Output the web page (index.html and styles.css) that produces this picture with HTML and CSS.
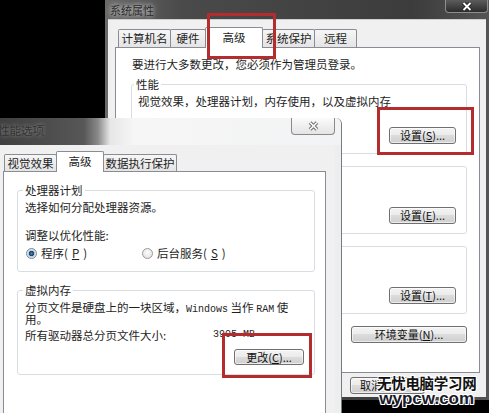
FILE: index.html
```html
<!DOCTYPE html>
<html lang="zh-CN">
<head>
  <meta charset="UTF-8">
  <title>系统属性 – 性能选项</title>
  <link rel="stylesheet" href="styles.css">
</head>
<body>

<!-- System properties window (behind) -->
<div class="win sys">
  <div class="titlebar">
    <span class="title">系统属性</span>
    <span class="close dark">
      <svg width="12" height="9" viewBox="0 0 12 9"><path d="M2.5 1 L9.5 8 M9.5 1 L2.5 8" stroke="#1a1a1a" stroke-width="3.6" fill="none"/><path d="M2.5 1 L9.5 8 M9.5 1 L2.5 8" stroke="#fff" stroke-width="1.9" fill="none"/></svg>
    </span>
  </div>
  <div class="client">
    <div class="tabs">
      <span class="tab w53">计算机名</span>
      <span class="tab w36">硬件</span>
      <span class="tab on w58">高级</span>
      <span class="tab w53">系统保护</span>
      <span class="tab w43">远程</span>
    </div>
    <div class="panel sys-panel">
      <p class="note">要进行大多数更改，您必须作为管理员登录。</p>
      <div class="group g1">
        <span class="legend">性能</span>
        <p class="desc">视觉效果，处理器计划，内存使用，以及虚拟内存</p>
        <button class="btn set">设置(<u>S</u>)...</button>
      </div>
      <div class="group g2">
        <button class="btn set">设置(<u>E</u>)...</button>
      </div>
      <div class="group g2">
        <button class="btn set">设置(<u>T</u>)...</button>
      </div>
      <button class="btn env">环境变量(<u>N</u>)...</button>
    </div>
    <div class="footer">
      <button class="btn foot cancel">取消</button>
    </div>
  </div>
</div>

<!-- Performance options window (front) -->
<div class="win perf">
  <div class="titlebar light">
    <span class="title">性能选项</span>
    <span class="close pale">
      <svg width="13" height="10" viewBox="0 0 13 10"><path d="M3 1.5 L10 8.5 M10 1.5 L3 8.5" stroke="#6f6f6f" stroke-width="3.6" fill="none"/><path d="M3 1.5 L10 8.5 M10 1.5 L3 8.5" stroke="#fafafa" stroke-width="1.7" fill="none"/></svg>
    </span>
  </div>
  <div class="client perf-client">
    <div class="tabs small">
      <span class="tab w53">视觉效果</span>
      <span class="tab on w48">高级</span>
      <span class="tab w74">数据执行保护</span>
    </div>
    <div class="panel perf-panel">
      <div class="group cpu">
        <span class="legend">处理器计划</span>
        <p class="line first">选择如何分配处理器资源。</p>
        <p class="line adjust">调整以优化性能:</p>
        <div class="radios">
          <label class="opt"><span class="radio checked"></span>程序(<u>P</u>)</label>
          <label class="opt"><span class="radio"></span>后台服务(<u>S</u>)</label>
        </div>
      </div>
      <div class="group vmem">
        <span class="legend">虚拟内存</span>
        <p class="wrap">分页文件是硬盘上的一块区域，<span class="mono">Windows</span> 当作 <span class="mono">RAM</span> 使</p>
        <p class="wrap second">用。</p>
        <div class="size"><span class="size-label">所有驱动器总分页文件大小:</span><span class="mono">3905 MB</span></div>
        <button class="btn change">更改(<u>C</u>)...</button>
      </div>
    </div>
  </div>
</div>

<!-- red highlight boxes drawn over the screenshot -->
<div class="mark m1"></div>
<div class="mark m2"></div>
<div class="mark m3"></div>

<div class="watermark">
  <span class="wm-cn">无忧电脑学习网</span>
  <span class="wm-en">wypcw.com</span>
</div>

</body>
</html>
```

FILE: styles.css
```css
* { box-sizing:border-box; }
body { margin:0; width:489px; height:413px; overflow:hidden; position:relative; background:#000; font-family:"Noto Sans CJK SC","Noto Sans",sans-serif; font-size:11.5px; color:#1e1e1e; }
p { margin:0; }
u { text-decoration:underline; }

/* windows */
.win { position:absolute; display:flex; flex-direction:column; }
.sys { left:105px; top:0; width:384px; height:400px; padding:0 3px 3px 3px; background:linear-gradient(90deg,#6a6a6a,#4a4a4a 20%,#3c3c3c 80%,#555); }
.perf { left:-6px; top:118px; width:348px; height:300px; padding:0 6px; background:linear-gradient(90deg,#4a4a4a,#dfe2e5 60%,#eceef0); border-right:1px solid #7a7a7a; border-radius:0 6px 0 0; z-index:2; }

.titlebar { display:flex; align-items:flex-start; justify-content:space-between; height:19px; flex:none; }
.title { line-height:14px; color:#2a2a2a; text-shadow:0 0 4px #d0d0d0, 0 0 7px #b8b8b8; }
.sys .title { margin:3px 0 0 2px; font-size:11px; }
.titlebar.light { height:27px; margin:0 -6px; padding-left:4px; background:linear-gradient(90deg,#3e3e3e 0,#575757 90px,#8a8a8a 104px,#e6e6e6 116px,#f6f6f6 140px,#f2f3f4 100%); border-radius:0 6px 0 0; }
.perf .title { margin-top:5px; color:#333; text-shadow:0 0 4px #9a9a9a; }

.close { display:flex; align-items:center; justify-content:center; border-radius:0 0 4px 4px; }
.close.dark { width:43px; height:13px; margin-right:-2px; background:linear-gradient(#5c5c5c,#2c2c2c); border:1px solid #8e8e8e; border-top:none; }
.close.pale { width:44px; height:17px; margin-right:6px; background:linear-gradient(#fbfbfb,#e4e4e4); border:1px solid #8a8a8a; border-top:none; }

.client { flex:1; display:flex; flex-direction:column; background:#f0f0f0; padding:7px 6px 0 7px; border-top:1px solid #cfcfcf; }
.perf-client { padding:7px 9px 0 3px; border-top:none; }

/* tabs */
.tabs { display:flex; align-items:flex-end; height:20px; margin-left:3px; flex:none; }
.tabs.small { height:19px; margin-left:1px; }
.tab { height:18px; line-height:17px; text-align:center; border:1px solid #898c95; border-bottom:none; margin-right:-1px; background:linear-gradient(#f6f6f6,#e4e4e4); border-radius:2px 2px 0 0; }
.tabs.small .tab { height:17px; line-height:16px; }
.tab.on, .tabs.small .tab.on { height:21px; margin-bottom:-1px; background:#fff; position:relative; z-index:1; line-height:19px; }
.w36 { width:36px; } .w43 { width:43px; } .w48 { width:48px; } .w53 { width:53px; } .w58 { width:58px; } .w74 { width:74px; }

.panel { display:flex; flex-direction:column; background:#fff; border:1px solid #898c95; }
.sys-panel { flex:0 0 326px; padding:0 12px 0 15px; }
.perf-panel { flex:1; padding:0 10px 0 13px; }

/* group boxes */
.group { display:flex; flex-direction:column; border:1px solid #d8dde2; border-radius:3px; padding:0 10px 0 7px; flex:none; }
.legend { align-self:flex-start; height:14px; line-height:14px; margin:-8px 0 0 -5px; padding:0 2px; background:#fff; }
.note { line-height:14px; margin:9px 0 0 1px; }
.g1 { margin-top:13px; height:70px; }
.g2 { margin-top:12px; height:68px; }
.desc { line-height:14px; margin:3px 0 0 -1px; }

.btn { font:inherit; font-size:11px; color:#111; height:17px; line-height:15px; padding:0; border:1px solid #707070; border-radius:3px; background:linear-gradient(#f4f4f4 0%,#ebebeb 49%,#dcdcdc 50%,#cfcfcf 100%); box-shadow:inset 0 0 0 1px rgba(255,255,255,.6); flex:none; }
.btn.set { width:67px; margin-top:auto; margin-bottom:9px; align-self:flex-end; }
.btn.env { width:116px; margin-top:12px; align-self:flex-end; }

.footer { display:flex; gap:6px; padding:4px 0 0 235px; }
.btn.foot { width:75px; }
.btn.cancel { text-align:left; padding-left:9px; }

/* performance options */
.cpu { margin-top:18px; height:82px; }
.cpu .legend, .vmem .legend { margin-left:-2px; }
.line { line-height:14px; }
.line.first { margin-top:3px; }
.line.adjust { margin-top:14px; }
.radios { display:flex; margin-top:4px; line-height:14px; }
.opt { display:flex; align-items:center; gap:4px; }
.opt:first-child { width:116px; margin-left:1px; }
.radio { width:11px; height:11px; border-radius:50%; border:1px solid #9a9a9a; background:radial-gradient(circle at 50% 40%,#fdfdfd,#dcdcdc); }
.radio.checked { border-color:#7a8a99; background:radial-gradient(circle,#4f86b8 0,#163f66 2.3px,#b9cbdc 3px,#f2f4f6 5px); }

.vmem { margin-top:18px; height:85px; }
.wrap { height:12px; line-height:12px; margin-top:4px; white-space:nowrap; flex:none; }
.wrap.second { margin-top:0; }
.mono { font-family:"Liberation Mono",monospace; font-size:10px; line-height:10px; }
.size { display:flex; align-items:center; height:14px; line-height:14px; margin-top:3px; flex:none; }
.size-label { width:188px; }
.btn.change { width:70px; height:16px; line-height:14px; margin-top:auto; margin-bottom:9px; align-self:flex-end; }

/* annotations */
.mark { position:absolute; border:3px solid #b52c2e; z-index:5; }
.m1 { left:207px; top:13px; width:69px; height:46px; }
.m2 { left:377px; top:107px; width:97px; height:48px; }
.m3 { left:222px; top:333px; width:90px; height:45px; }

.watermark { position:absolute; left:377px; top:374px; z-index:6; display:flex; flex-direction:column; align-items:center; line-height:17px; color:#111; text-shadow:1px 1px 0 #fff,-1px -1px 0 #fff,1px -1px 0 #fff,-1px 1px 0 #fff,0 1px 0 #fff,1px 0 0 #fff; }
.wm-cn { font-weight:bold; font-size:14.5px; letter-spacing:-0.3px; }
.wm-en { font-family:"Liberation Sans",sans-serif; font-weight:bold; font-size:17px; line-height:16px; color:#1a1a2a; }
```
